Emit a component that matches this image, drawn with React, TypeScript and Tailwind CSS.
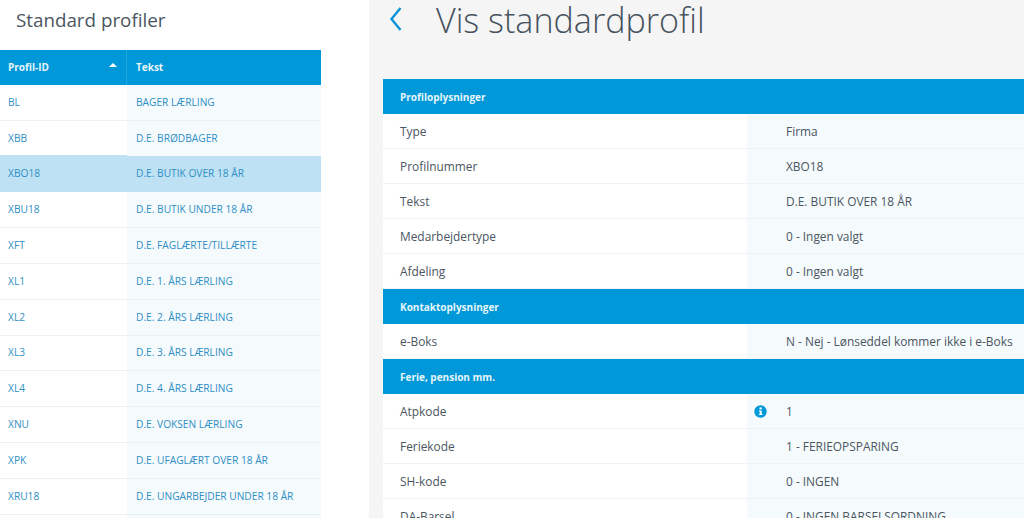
const PROFILES = [
  ["BL", "BAGER LÆRLING"],
  ["XBB", "D.E. BRØDBAGER"],
  ["XBO18", "D.E. BUTIK OVER 18 ÅR"],
  ["XBU18", "D.E. BUTIK UNDER 18 ÅR"],
  ["XFT", "D.E. FAGLÆRTE/TILLÆRTE"],
  ["XL1", "D.E. 1. ÅRS LÆRLING"],
  ["XL2", "D.E. 2. ÅRS LÆRLING"],
  ["XL3", "D.E. 3. ÅRS LÆRLING"],
  ["XL4", "D.E. 4. ÅRS LÆRLING"],
  ["XNU", "D.E. VOKSEN LÆRLING"],
  ["XPK", "D.E. UFAGLÆRT OVER 18 ÅR"],
  ["XRU18", "D.E. UNGARBEJDER UNDER 18 ÅR"],
  ["", ""],
];

const SECTIONS = [
  {
    title: "Profiloplysninger",
    rows: [
      ["Type", "Firma"],
      ["Profilnummer", "XBO18"],
      ["Tekst", "D.E. BUTIK OVER 18 ÅR"],
      ["Medarbejdertype", "0 - Ingen valgt"],
      ["Afdeling", "0 - Ingen valgt"],
    ],
  },
  {
    title: "Kontaktoplysninger",
    rows: [["e-Boks", "N - Nej - Lønseddel kommer ikke i e-Boks"]],
  },
  {
    title: "Ferie, pension mm.",
    rows: [
      ["Atpkode", "1"],
      ["Feriekode", "1 - FERIEOPSPARING"],
      ["SH-kode", "0 - INGEN"],
      ["DA-Barsel", "0 - INGEN BARSELSORDNING"],
    ],
  },
];

function InfoIcon() {
  return (
    <svg width="13" height="13" viewBox="0 0 13 13">
      <circle cx="6.5" cy="6.5" r="6.2" fill="#0098d8" />
      <rect x="5.5" y="2.4" width="2.2" height="2" fill="#fff" />
      <path d="M4.9 5.4h2.8v3.6h.8v1.1H4.9V9h.8V6.5h-.8z" fill="#fff" />
    </svg>
  );
}

function BackIcon() {
  return (
    <svg width="14" height="26" viewBox="0 0 14 26" className="mt-[6px] ml-[6px] shrink-0">
      <path d="M11.5 2 2.5 13l9 11" fill="none" stroke="#0a93d6" strokeWidth="2.4" />
    </svg>
  );
}

export default function App() {
  return (
    <div className="flex h-[518px] w-[1024px] overflow-hidden bg-white font-['Open_Sans',sans-serif]">
      <div className="w-[369px] shrink-0">
        <h2 className="h-[50px] pl-4 pt-[5px] text-[18.8px] leading-[30px] text-[#4b5661]">Standard profiler</h2>
        <div className="w-[321px]">
          <div className="flex h-[35px] items-center bg-[#0098d8] text-[10px] font-bold text-[#e6f5fb]">
            <div className="relative flex h-full w-[127px] items-center border-r border-[#22a6de] pl-2">
              Profil-ID
              <span className="absolute right-[9px] top-[13px] h-0 w-0 border-x-[4px] border-b-[4px] border-x-transparent border-b-white" />
            </div>
            <div className="pl-[9px]">Tekst</div>
          </div>
          {PROFILES.map(([id, text], i) => (
            <div
              key={i}
              className={
                id === "XBO18"
                  ? "-mt-[2px] flex h-[37.8px] items-center border-b border-[#c2e3f3] bg-[#bee2f4] pt-px text-[10.2px] text-[#2f8fc4]"
                  : "flex h-[35.8px] items-center border-b border-[#ebf0f4] text-[10.2px] text-[#2f8fc4]"
              }
            >
              <div className="flex h-full w-[127px] items-center pl-2">{id}</div>
              <div className={id === "XBO18" ? "flex h-full flex-1 items-center pl-[9px]" : "flex h-full flex-1 items-center bg-[#f5fafd] pl-[9px]"}>
                {text}
              </div>
            </div>
          ))}
        </div>
      </div>
      <div className="flex-1 overflow-hidden bg-[#f5f5f5] pl-[14px]">
        <div className="flex h-[79px] items-start">
          <BackIcon />
          <h1 className="ml-[33px] text-[34.1px] font-light leading-[40px] text-[#47525e]">Vis standardprofil</h1>
        </div>
        <div className="w-[660px] bg-white">
          {SECTIONS.map((s) => (
            <div key={s.title}>
              <div className="flex h-[35px] items-center bg-[#0098d8] pl-[17px] pt-[2px] text-[10px] font-bold text-[#e6f5fb]">{s.title}</div>
              {s.rows.map(([label, value]) => (
                <div key={label} className="flex h-[35px] border-b border-[#f0f2f4] text-[11.9px] text-[#4b5661]">
                  <div className="flex w-[364px] items-center pl-[17px] pt-[2px]">{label}</div>
                  <div className="flex flex-1 items-center bg-[#f5fafd]">
                    <div className="flex w-[39px] justify-center pr-[12px]">{label === "Atpkode" ? <InfoIcon /> : null}</div>
                    <span className="pt-[2px]">{value}</span>
                  </div>
                </div>
              ))}
            </div>
          ))}
        </div>
      </div>
    </div>
  );
}
